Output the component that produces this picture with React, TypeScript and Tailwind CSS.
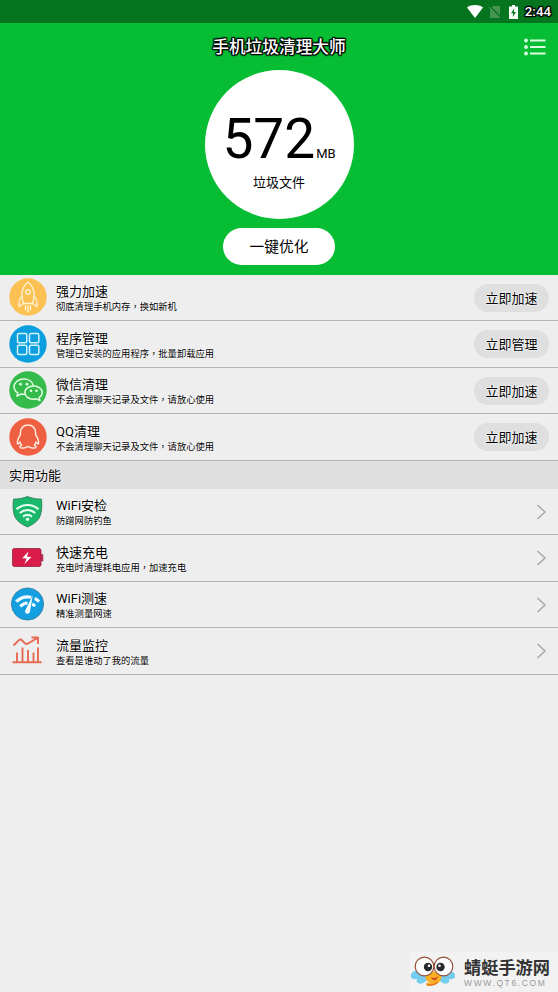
import React from 'react';

const outline =
  '[text-shadow:-1px_-1px_1px_#000,1px_-1px_1px_#000,-1px_1px_1px_#000,1px_1px_1px_#000,0_-1px_1px_#000,0_1px_1px_#000,1px_0_1px_#000,-1px_0_1px_#000]';
const halo = '[text-shadow:0_0_1px_#fff,0_0_2px_#fff,0_0_2px_#fff]';

const RocketIcon = () => (
  <svg width="38" height="38" viewBox="0 0 38 38" fill="none">
    <circle cx="19" cy="19" r="18.7" fill="#fbc152" />
    <g stroke="#fff3d8" strokeWidth="1.3" strokeLinejoin="round" strokeLinecap="round">
      <path d="M14.500 25.500c-1-3-1.500-5.700-1.500-9 0-5 2.200-9.500 6-12.300 3.800 2.800 6 7.300 6 12.300 0 3.300-.5 6-1.500 9z" />
      <circle cx="19" cy="14" r="2.300" />
      <path d="M13 18.500c-2 1.700-3 3.600-3 5.800v4.400l4.500-3.200M25 18.500c2 1.700 3 3.600 3 5.800v4.400l-4.500-3.200" />
      <path d="M16.500 28v4M19 28v6M21.500 28v4" />
    </g>
  </svg>
);

const AppsIcon = () => (
  <svg width="38" height="38" viewBox="0 0 38 38" fill="none">
    <circle cx="19" cy="19" r="18.7" fill="#0b9fe0" />
    <g stroke="#d4f3ff" strokeWidth="1.5">
      <rect x="8.500" y="8.500" width="9.300" height="9.300" rx="1.500" />
      <rect x="20.500" y="8.500" width="9.300" height="9.300" rx="1.500" />
      <rect x="8.500" y="20.300" width="9.300" height="9.300" rx="1.500" />
      <rect x="20.500" y="20.300" width="9.300" height="9.300" rx="1.500" />
    </g>
  </svg>
);

const WechatIcon = () => (
  <svg width="38" height="38" viewBox="0 0 38 38" fill="none">
    <circle cx="19" cy="19" r="18.7" fill="#35bb4b" />
    <g stroke="#e4ffe4" strokeWidth="1.500" strokeLinejoin="round">
      <path d="M24.300 14.300c-.7-3.700-4.600-6.300-9.600-6.300C9.500 8 5 11.400 5 15.700c0 2.700 1.500 4.700 3.900 6.200l-1 3.300 4-2.100c1.200.3 2.300.4 4.300.4" />
      <path d="M24.500 15c-4.900 0-8.600 2.900-8.600 6.600s3.700 6.600 8.600 6.600c1 0 2-.1 2.900-.4l3.600 1.800-.9-2.900c2-1.300 3.100-3 3.100-5.100 0-3.700-3.800-6.600-8.700-6.600z" />
    </g>
    <g fill="#e4ffe4">
      <circle cx="11.500" cy="13.200" r="1.400" />
      <circle cx="18" cy="13.200" r="1.400" />
      <circle cx="22" cy="19.700" r="1.300" />
      <circle cx="27.500" cy="19.700" r="1.300" />
    </g>
  </svg>
);

const QQIcon = () => (
  <svg width="38" height="38" viewBox="0 0 38 38" fill="none">
    <circle cx="19" cy="19" r="18.7" fill="#ee6041" />
    <path
      d="M19 7c-4.600 0-7.600 3.200-7.600 7.600v2.200c-1.900 2.600-3.100 5.200-3.100 7.600 0 1.500.7 1.800 1.300 1.200l1.400-1.500c.3 1.200.9 2.200 1.700 3-1.500.7-2 1.500-1.700 2.200.6 1.100 5.900 1.100 7-.6h2c1.100 1.700 6.400 1.700 7 .6.3-.7-.2-1.500-1.700-2.200.8-.8 1.400-1.800 1.700-3l1.400 1.500c.6.6 1.300.3 1.300-1.200 0-2.400-1.200-5-3.100-7.600v-2.200C26.600 10.200 23.600 7 19 7z"
      stroke="#ffe9dd"
      strokeWidth="1.500"
      strokeLinejoin="round"
    />
  </svg>
);

const ShieldIcon = () => (
  <svg width="38" height="38" viewBox="0 0 38 38" fill="none" className="mt-px">
    <path
      d="M18.500 3.500c-4.300 1.700-8.700 2.500-14 2.600-.8 5.500-.7 12.500 1.200 17.200C7.800 28.200 13 31.500 18.500 34c5.500-2.500 10.400-5.800 12.500-10.700 1.900-4.700 2.200-11.700 1.400-17.200-5.300-.1-9.600-.9-13.900-2.600z"
      fill="#19b86b"
      stroke="#2c7853"
      strokeWidth=".8"
    />
    <g stroke="#e4fff1" strokeWidth="2.200" fill="none">
      <path d="M7.500 16.200c6.800-5.600 15.200-5.600 22 0M10.700 20c4.800-3.900 10.800-3.900 15.600 0M14 23.600c2.800-2.100 6.200-2.100 9 0" />
    </g>
    <circle cx="18.500" cy="26.300" r="1.700" fill="#e4fff1" />
  </svg>
);

const BatteryIcon = () => (
  <svg width="38" height="38" viewBox="0 0 38 38" fill="none">
    <rect x="3.500" y="9.500" width="28.500" height="18" rx="1.800" fill="#d91b49" stroke="#8f2543" strokeWidth=".8" />
    <path d="M32.300 15.500h1.600v6.500h-1.600z" fill="#d91b49" stroke="#8f2543" strokeWidth=".6" />
    <path d="M19.500 12.500l-6.300 6.800 4.300.3-2 5.500 7-7-4.500-.4z" fill="#fff" />
  </svg>
);

const SpeedIcon = () => (
  <svg width="38" height="38" viewBox="0 0 38 38" fill="none">
    <circle cx="18.500" cy="19" r="16.100" fill="#139fe0" stroke="#397c9f" strokeWidth=".8" />
    <g stroke="#edfaff" strokeWidth="3.200">
      <path d="M7.200 16.700c4.200-4 9.500-5.600 15-4.500M25.700 13.500c1.600.7 3 1.800 4.400 3.200M11.300 21.300c2.200-2.100 4.800-3.200 7.200-3.300M23.200 18.900c1.100.6 2 1.400 2.800 2.300" />
    </g>
    <path d="M23.700 10.500l-7.300 14.700c-.8 1.900.2 3.300 1.800 3.500 1.600.1 2.500-1 2.800-2.500z" fill="#fff" />
  </svg>
);

const TrafficIcon = () => (
  <svg width="38" height="38" viewBox="0 0 38 38" fill="none" stroke="#e76b53" strokeWidth="1.900" className="mt-px">
    <path d="M4.500 13.500l5.200-5.100c1.200-1.100 2.500-.9 3.500.1l2.800 2.800c1.100 1 2.300 1 3.400-.1l9.500-5.500M22.500 5.500h6.500V12" />
    <path d="M3.500 30.300h29M8 30V20.500M13.500 30V15.500M19 30V18M24.500 30V20.500M29 30V15.500" />
  </svg>
);

const MascotIcon = () => (
  <svg width="46" height="34" viewBox="0 0 46 34">
    <path d="M13 15C5 14 0 18 1 22c1 3 5 2 6 2-2 5 5 7 10 1zM33 15c8-1 13 3 12 7-1 3-5 2-6 2 2 5-5 7-10 1z" fill="#74ccef" />
    <path d="M17 18c4-2 11-2 14 1 2 5-2 10-8 11-3 1-7 2-7-1 1-3 4 0 5-1-5-1-7-6-4-10z" fill="#fbaf22" />
    <path d="M17 29c3 2 8 1 11-2" stroke="#e37420" strokeWidth="1.500" fill="none" />
    <circle cx="14.500" cy="11.500" r="9.300" fill="#fff" stroke="#95523c" strokeWidth="1.200" />
    <circle cx="33.500" cy="11.500" r="9.300" fill="#fff" stroke="#95523c" strokeWidth="1.200" />
    <circle cx="18" cy="12" r="4.200" fill="#272a2b" />
    <circle cx="30.500" cy="12" r="4.200" fill="#272a2b" />
    <circle cx="19" cy="10.800" r="1.300" fill="#fff" />
    <circle cx="29.500" cy="10.800" r="1.300" fill="#fff" />
    <path d="M21 22c3 2 5 1 7-1-1 5-5 6-7 1z" fill="#cf4936" />
  </svg>
);

const cleanRows = [
  { icon: <RocketIcon />, title: '强力加速', text: '彻底清理手机内存，换如新机', action: '立即加速' },
  { icon: <AppsIcon />, title: '程序管理', text: '管理已安装的应用程序，批量卸载应用', action: '立即管理' },
  { icon: <WechatIcon />, title: '微信清理', text: '不会清理聊天记录及文件，请放心使用', action: '立即加速' },
  { icon: <QQIcon />, title: 'QQ清理', text: '不会清理聊天记录及文件，请放心使用', action: '立即加速' },
];

const toolRows = [
  { icon: <ShieldIcon />, title: 'WiFi安检', text: '防蹭网防钓鱼' },
  { icon: <BatteryIcon />, title: '快速充电', text: '充电时清理耗电应用，加速充电' },
  { icon: <SpeedIcon />, title: 'WiFi测速', text: '精准测量网速' },
  { icon: <TrafficIcon />, title: '流量监控', text: '查看是谁动了我的流量' },
];

interface RowProps {
  icon: React.ReactNode;
  title: string;
  text: string;
  action?: string;
}

const Row: React.FC<RowProps> = ({ icon, title, text, action }) => {
  const [first, second] = text.split('，');

  return (
    <div className="flex h-[46.5px] items-center border-b border-[#b5b5b5] pl-[9px] pr-[9px]">
      <div className="shrink-0">{icon}</div>
      <div className={`ml-[9px] flex-1 whitespace-nowrap pt-[2px] text-black ${halo}`}>
        <div className="text-[13px] leading-[17px]">{title}</div>
        <div className="text-[9.3px] leading-[13px]">
          {first}
          {second && <span lang="zh-TW" className="font-['Noto_Sans_CJK_TC',sans-serif]">，</span>}
          {second}
        </div>
      </div>
      {action ? (
        <button className={`mt-px h-7 w-[75px] rounded-full bg-[#dfdfdf] pt-px text-[13px] leading-[28px] text-black ${halo}`}>
          {action}
        </button>
      ) : (
        <svg width="14" height="18" viewBox="0 0 14 18" fill="none" stroke="#a5a5a5" strokeWidth="1.400" className="mt-px">
          <path d="M2.500 2l7.500 7-7.500 7" />
        </svg>
      )}
    </div>
  );
};

export default function App() {
  return (
    <div className="flex h-[992px] w-[558px] flex-col overflow-hidden bg-[#eeeeee] font-[Roboto,'Noto_Sans_CJK_SC',sans-serif] text-black">
      <div className="flex h-[23px] shrink-0 items-center justify-end bg-[#04741f] pr-[7px]">
        <svg width="16" height="13" viewBox="0 0 16 13" className="mr-[6px]">
          <path d="M0 2.500C4.500-.7 11.500-.7 16 2.500L8 13z" fill="#fff" />
        </svg>
        <svg width="12" height="14" viewBox="0 0 12 14" className="mr-[8px]">
          <path d="M4 1h7v12H1V4z" fill="#459452" />
          <path d="M0 1l12 12" stroke="#04741f" strokeWidth="2" />
          <path d="M0 2l11 11" stroke="#579b5f" strokeWidth="1" />
        </svg>
        <svg width="9" height="14" viewBox="0 0 9 14" className="mr-[7px]">
          <path d="M3 0h3v1.500h3V14H0V1.500h3z" fill="#f5fff6" />
          <path d="M5.300 3.500L2 8.200h2.200L3.700 12 7 7H4.800z" fill="#04741f" />
        </svg>
        <span className={`pt-px text-[13.300px] font-medium leading-none text-white ${outline}`}>2:44</span>
      </div>

      <header className="flex h-[251.500px] shrink-0 flex-col items-center bg-[#06bd34]">
        <div className="grid h-[47px] w-full grid-cols-[1fr_auto_1fr] items-center px-[12px]">
          <h1 className={`col-start-2 pt-[2px] text-[16.7px] font-medium leading-6 text-white ${outline}`}>手机垃圾清理大师</h1>
          <svg width="22" height="18" viewBox="0 0 22 18" className="justify-self-end" stroke="#dcffdf" fill="#dcffdf" strokeWidth="1.800">
            <path d="M6 2.500h15.500M6 9h15.500M6 15.500h15.500" />
            <circle cx="2" cy="2.500" r="1" />
            <circle cx="2" cy="9" r="1" />
            <circle cx="2" cy="15.500" r="1" />
          </svg>
        </div>
        <div className="flex size-[149px] shrink-0 flex-col items-center rounded-full bg-white pt-[37px]">
          <div className="flex h-[64px] items-baseline leading-[64px]">
            <span className="text-[55px]">572</span>
            <span className="ml-px text-[13px]">MB</span>
          </div>
          <div className="mt-[3px] text-[13px] leading-[18px]">垃圾文件</div>
        </div>
        <button className="mt-[9px] h-[37px] w-[112px] rounded-full bg-white pt-[2px] text-[14.700px] leading-[35px]">一键优化</button>
      </header>

      <main className="flex-1">
        {cleanRows.map((row) => (
          <Row key={row.title} {...row} />
        ))}
        <h2 className={`h-7 bg-[#dfdfdf] pl-[9px] text-[13px] leading-[29px] ${halo}`}>实用功能</h2>
        {toolRows.map((row) => (
          <Row key={row.title} {...row} />
        ))}
      </main>

      <footer className="flex h-[40px] shrink-0 items-center self-end bg-[#f2f2f2] pr-[8px]">
        <MascotIcon />
        <div className="ml-[8px] flex flex-col pt-[2px]">
          <span className="text-[17.200px] font-bold leading-[20px] text-[#333]">蜻蜓手游网</span>
          <span className="font-['Liberation_Sans',sans-serif] text-[8.500px] leading-[10px] tracking-[1.600px] text-[#999]">WWW.QT6.COM</span>
        </div>
      </footer>
    </div>
  );
}
